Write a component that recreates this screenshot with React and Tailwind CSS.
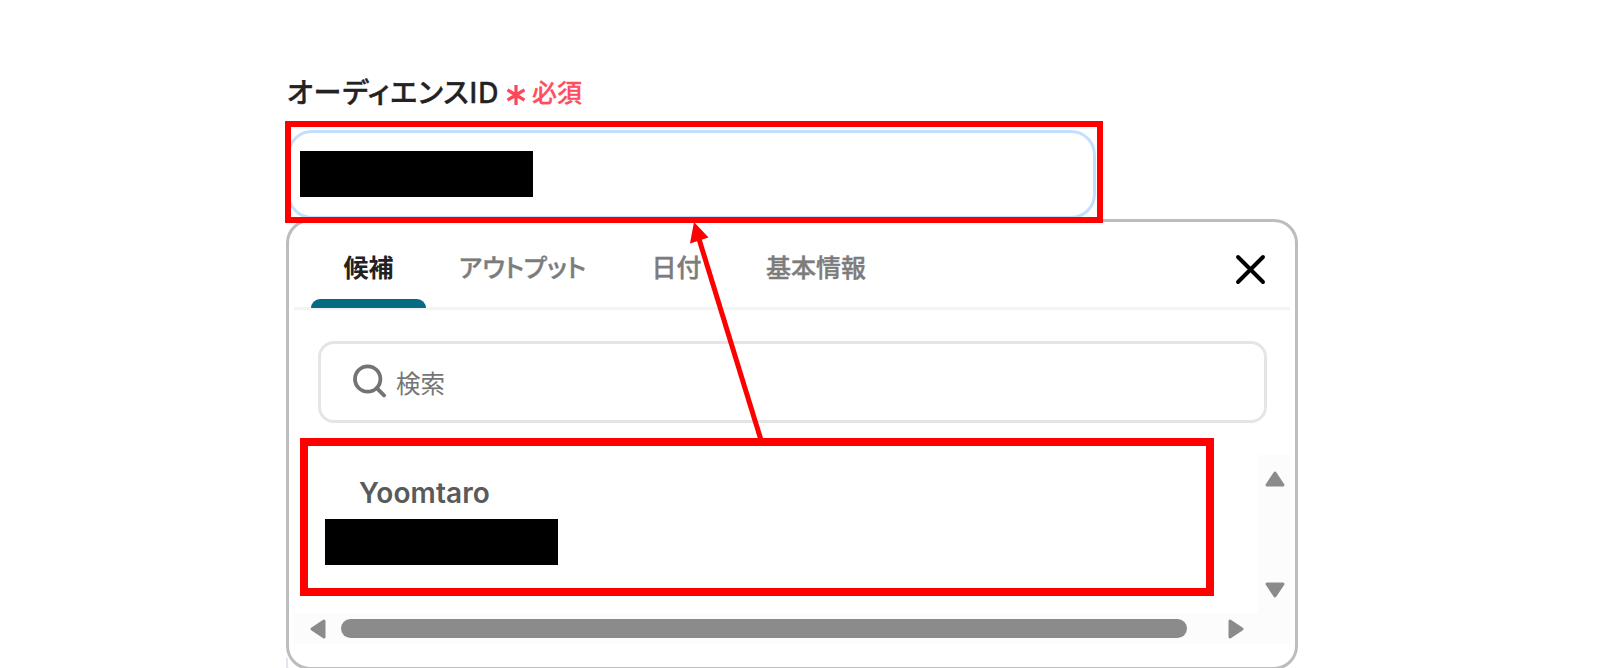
import React, { useState } from 'react';

const tabs = [
  { id: 'candidate', label: '候補', width: 'w-[115px]' },
  { id: 'output', label: 'アウトプット', width: 'w-[193px]' },
  { id: 'date', label: '日付', width: 'w-[115px]' },
  { id: 'basic', label: '基本情報', width: 'w-[164px]' },
];

const Caret = ({ className }) => (
  <svg className={className} width="20" height="16" viewBox="0 0 20 16">
    <path d="M10 2 L18 14 H2 Z" fill="#8b8b8b" stroke="#8b8b8b" strokeWidth="3" strokeLinejoin="round" />
  </svg>
);

const FieldLabel = () => (
  <div className="flex h-[42px] items-center whitespace-nowrap">
    <span className="mt-px w-[221px] pl-px text-[28px] font-medium tracking-[1px] text-[#222] [-webkit-text-stroke:0.4px_#222] [font-feature-settings:'palt']">
      オーディエンスID
    </span>
    <svg className="mt-[6px]" width="18" height="20" viewBox="0 0 18 20" fill="none" stroke="#ff4558" strokeWidth="3.2">
      <path d="M9 0V20M0.5 5L17.5 15M17.5 5L0.5 15" />
    </svg>
    <span className="ml-[7px] mt-[4px] text-[25px] font-medium text-[#ff4d60] [-webkit-text-stroke:0.3px_#ff4d60]">必須</span>
  </div>
);

const TabBar = ({ active, onChange }) => (
  <div className="mx-[5px] flex h-[88px] items-stretch border-b-[3px] border-[#f3f3f3] pl-[17px]">
    {tabs.map((tab) => (
      <button
        key={tab.id}
        onClick={() => onChange(tab.id)}
        className={`flex flex-col items-center whitespace-nowrap text-[25px] [font-feature-settings:'palt'] ${tab.width} ${
          active === tab.id ? 'font-bold text-[#222]' : 'font-medium text-[#7c7c7c] [-webkit-text-stroke:0.4px_#7c7c7c]'
        }`}
      >
        <span className="flex flex-1 items-center pt-[9px]">{tab.label}</span>
        {active === tab.id && <span className="-mt-[8px] h-[9px] w-full translate-y-px rounded-t-[9px] bg-[#066a82]" />}
      </button>
    ))}
    <button className="ml-auto mr-[24px] mt-[32px] self-start" aria-label="close">
      <svg width="31" height="31" viewBox="0 0 31 31" fill="none" stroke="#000" strokeWidth="3.9" strokeLinecap="round">
        <path d="M3 3L28 28M28 3L3 28" />
      </svg>
    </button>
  </div>
);

const SearchBox = () => (
  <div className="ml-[29px] mt-[31px] flex h-[82px] w-[949px] items-center rounded-[16px] border-[3px] border-[#e5e5e5] pl-[32px]">
    <svg className="-mt-[3px]" width="34" height="34" viewBox="0 0 34 34" fill="none" stroke="#737373" strokeWidth="3.8" strokeLinecap="round">
      <circle cx="14.7" cy="15" r="12.7" />
      <path d="M23.8 24.2L31 31.4" />
    </svg>
    <span className="ml-[9px] mt-[5px] text-[24.5px] text-[#757575]">検索</span>
  </div>
);

const CandidateList = () => (
  <div className="mx-[5px] mt-[32px] grid grid-cols-[1fr_32px] grid-rows-[158px_31px]">
    <div className="pl-[66px] pt-[20px]">
      <p className="-ml-px text-[28px] leading-[36px] font-semibold tracking-[0.1px] text-[#5a5a5a]">Yoomtaro</p>
      <div className="-ml-[35px] mt-[8px] h-[46px] w-[233px] bg-black" />
    </div>
    <div className="flex flex-col items-center justify-between bg-[#fcfcfc] pt-[16px] pb-[15px] pl-[2px]">
      <Caret />
      <Caret className="rotate-180" />
    </div>
    <div className="col-span-2 flex items-center bg-[#fcfcfc] pl-[14px]">
      <Caret className="-rotate-90" />
      <div className="ml-[13px] h-[19px] w-[846px] rounded-full bg-[#8b8b8b]" />
      <Caret className="ml-[39px] rotate-90" />
    </div>
  </div>
);

export default function App() {
  const [active, setActive] = useState('candidate');

  return (
    <div className="relative h-[668px] w-[1600px] overflow-hidden bg-white pl-[286px] pt-[71px] font-['Inter','Noto_Sans_CJK_JP',sans-serif]">
      <FieldLabel />

      {/* Input field */}
      <div className="ml-[1px] mt-[17px] h-[89px] w-[809px] rounded-[25px] border-[3px] border-[#c3dfff] pl-[10px] pt-[18px]">
        <div className="h-[46px] w-[233px] bg-black" />
      </div>

      {/* Dropdown panel */}
      <div className="h-[451px] w-[1012px] rounded-[24px] border-[3px] border-[#bdbdbd] bg-white">
        <TabBar active={active} onChange={setActive} />
        <SearchBox />
        <CandidateList />
      </div>

      {/* Highlights over the field and the candidate */}
      <div className="absolute left-[285px] top-[121px] h-[102px] w-[818px] border-[6px] border-[#f00]" />
      <div className="absolute left-[300px] top-[438px] h-[158px] w-[914px] border-[8px] border-[#f00]" />
      <svg className="pointer-events-none absolute left-0 top-0" width="1600" height="668" viewBox="0 0 1600 668">
        <path d="M761 440L699 239" stroke="#f00" strokeWidth="5" fill="none" />
        <path d="M694 222L708.5 237.5L690 243.5Z" fill="#f00" />
        <path d="M287 658V668" stroke="#e3e6ec" strokeWidth="2" />
      </svg>
    </div>
  );
}
